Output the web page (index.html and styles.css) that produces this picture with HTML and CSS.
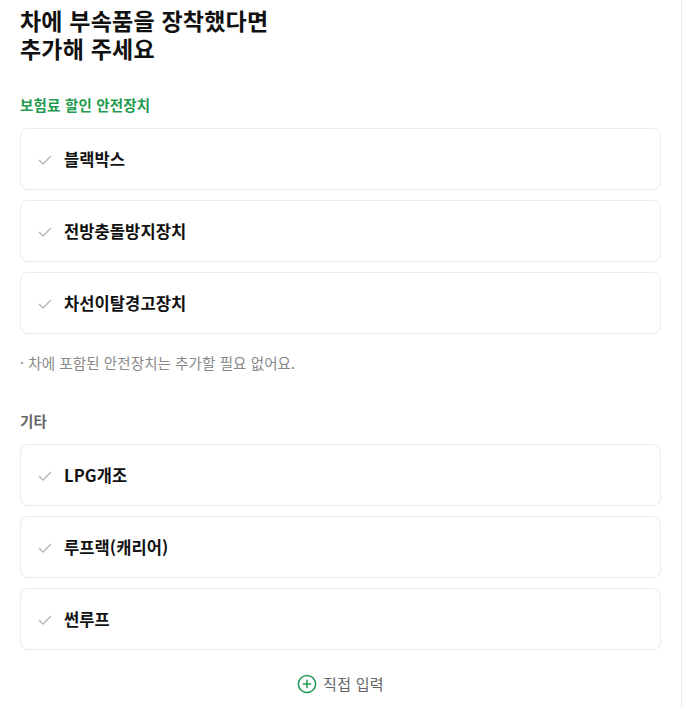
FILE: index.html
```html
<!DOCTYPE html>
<html lang="ko">
<head>
<meta charset="utf-8">
<link rel="stylesheet" href="styles.css">
</head>
<body>
<div class="page">
  <h1 class="title"><span class="line">차에 부속품을 장착했다면</span><span class="line">추가해 주세요</span></h1>

  <div class="section-label green">보험료 할인 안전장치</div>
  <div class="list">
    <div class="card"><svg class="check" viewBox="0 0 14 10" width="14" height="10"><path d="M1 5 L5 9 L13 1" fill="none" stroke="#b4b4b4" stroke-width="1.3"/></svg><span>블랙박스</span></div>
    <div class="card"><svg class="check" viewBox="0 0 14 10" width="14" height="10"><path d="M1 5 L5 9 L13 1" fill="none" stroke="#b4b4b4" stroke-width="1.3"/></svg><span>전방충돌방지장치</span></div>
    <div class="card"><svg class="check" viewBox="0 0 14 10" width="14" height="10"><path d="M1 5 L5 9 L13 1" fill="none" stroke="#b4b4b4" stroke-width="1.3"/></svg><span>차선이탈경고장치</span></div>
  </div>
  <p class="note">· 차에 포함된 안전장치는 추가할 필요 없어요.</p>

  <div class="section-label gray">기타</div>
  <div class="list">
    <div class="card"><svg class="check" viewBox="0 0 14 10" width="14" height="10"><path d="M1 5 L5 9 L13 1" fill="none" stroke="#b4b4b4" stroke-width="1.3"/></svg><span>LPG개조</span></div>
    <div class="card"><svg class="check" viewBox="0 0 14 10" width="14" height="10"><path d="M1 5 L5 9 L13 1" fill="none" stroke="#b4b4b4" stroke-width="1.3"/></svg><span>루프랙(캐리어)</span></div>
    <div class="card"><svg class="check" viewBox="0 0 14 10" width="14" height="10"><path d="M1 5 L5 9 L13 1" fill="none" stroke="#b4b4b4" stroke-width="1.3"/></svg><span>썬루프</span></div>
  </div>

  <div class="add">
    <svg class="plus" viewBox="0 0 20 20" width="20" height="20"><circle cx="10" cy="10" r="8.6" fill="none" stroke="#1f9a55" stroke-width="1.5"/><path d="M10 5.8 V14.2 M5.8 10 H14.2" stroke="#1f9a55" stroke-width="1.5"/></svg>
    <span>직접 입력</span>
  </div>
</div>
</body>
</html>
```

FILE: styles.css
```css
html, body {
  margin: 0;
  padding: 0;
  background: #fff;
}
body {
  font-family: "Noto Sans CJK KR", "Noto Sans", "Liberation Sans", sans-serif;
  color: #111;
}
.page {
  width: 682px;
  min-height: 708px;
  box-sizing: border-box;
  border-right: 1px solid #ececec;
  padding: 6px 20px 0 20px;
}
.title {
  margin: 0;
  font-size: 23px;
  font-weight: 700;
  color: #111;
  display: flex;
  flex-direction: column;
}
.title .line {
  display: block;
  height: 28px;
  line-height: 28px;
  letter-spacing: 0.2px;
}
.section-label {
  font-size: 14.5px;
  line-height: 20px;
  font-weight: 700;
  margin: 33px 0 13px;
  letter-spacing: 0.2px;
}
.section-label.green { color: #1f9a4e; }
.section-label.gray { color: #666; margin-top: 38px; }
.list {
  display: flex;
  flex-direction: column;
  gap: 10px;
}
.card {
  height: 62px;
  box-sizing: border-box;
  border: 1px solid #ebebeb;
  border-radius: 8px;
  display: flex;
  align-items: center;
  padding-left: 17px;
  gap: 12px;
  font-size: 16.5px;
  font-weight: 700;
  color: #111;
  letter-spacing: 0.1px;
}
.check { flex: none; margin-top: 1px; }
.note {
  margin: 19px 0 0;
  font-size: 14.5px;
  line-height: 20px;
  color: #888;
  letter-spacing: 0.1px;
}
.add {
  margin-top: 24px;
  display: flex;
  justify-content: center;
  align-items: center;
  gap: 6px;
  font-size: 15px;
  line-height: 20px;
  color: #666;
  letter-spacing: 0.3px;
}
.plus { flex: none; }
```
